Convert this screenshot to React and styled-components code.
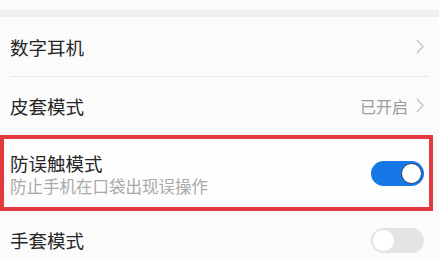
import React from "react"
import styled, { createGlobalStyle } from "styled-components"

const GlobalStyle = createGlobalStyle`
  html, body {
    margin: 0;
    padding: 0;
    background: #fbfbfb;
  }
  body {
    font-family: "Noto Sans CJK SC", "Noto Sans", sans-serif;
  }
`

const Page = styled.div`
  width: 439px;
  height: 258px;
  overflow: hidden;
  display: flex;
  flex-direction: column;
  background: #fbfbfb;
`

const TopSpace = styled.div`
  height: 10px;
  background: #fbfbfb;
  flex-shrink: 0;
`

const Band = styled.div`
  height: 7px;
  background: #efefef;
  flex-shrink: 0;
`

const Row = styled.div`
  display: flex;
  align-items: center;
  justify-content: space-between;
  height: ${(p) => p.h}px;
  padding: 0 15px 0 10px;
  flex-shrink: 0;
  box-sizing: border-box;
`

const Divider = styled.div`
  height: 1px;
  margin: 0 10px;
  background: #e9e9e9;
  flex-shrink: 0;
`

const Highlight = styled.div`
  display: flex;
  align-items: center;
  justify-content: space-between;
  width: 433px;
  height: 76px;
  margin-top: 1px;
  border: 4px solid #e23a3f;
  box-sizing: border-box;
  padding: 0 5px 0 6px;
  background: #fdfdfd;
  flex-shrink: 0;
`

const TextCol = styled.div`
  display: flex;
  flex-direction: column;
  gap: 1px;
`

const Title = styled.div`
  font-size: 18.5px;
  line-height: 24px;
  color: #262626;
`

const Sub = styled.div`
  font-size: 16.5px;
  line-height: 20px;
  color: #a9a9a9;
`

const Right = styled.div`
  display: flex;
  align-items: center;
  gap: 8px;
  color: #9a9a9a;
  font-size: 16px;
`

const Toggle = styled.div`
  position: relative;
  width: 53px;
  height: 25px;
  border-radius: 13px;
  background: ${(p) => (p.on ? "#1677e6" : "#e4e4e4")};
  flex-shrink: 0;
`

const Knob = styled.div`
  position: absolute;
  top: 2px;
  ${(p) => (p.on ? "right: 2px;" : "left: 2px;")}
  width: 21px;
  height: 21px;
  border-radius: 50%;
  background: #fff;
  box-sizing: border-box;
  border: ${(p) => (p.on ? "1.5px solid #1d3f66" : "none")};
`

function Chevron() {
  return (
    <svg width="8" height="15" viewBox="0 0 8 15">
      <path d="M1 1 L7 7.5 L1 14" fill="none" stroke="#c4c4c4" strokeWidth="1.3" />
    </svg>
  )
}

export default function App() {
  return (
    <>
      <GlobalStyle />
      <Page>
        <TopSpace />
        <Band />
        <Row h={59}>
          <Title>数字耳机</Title>
          <Right>
            <Chevron />
          </Right>
        </Row>
        <Divider />
        <Row h={57}>
          <Title>皮套模式</Title>
          <Right>
            <span>已开启</span>
            <Chevron />
          </Right>
        </Row>
        <Highlight>
          <TextCol>
            <Title>防误触模式</Title>
            <Sub>防止手机在口袋出现误操作</Sub>
          </TextCol>
          <Toggle on>
            <Knob on />
          </Toggle>
        </Highlight>
        <Row h={58}>
          <Title>手套模式</Title>
          <Toggle>
            <Knob />
          </Toggle>
        </Row>
      </Page>
    </>
  )
}
